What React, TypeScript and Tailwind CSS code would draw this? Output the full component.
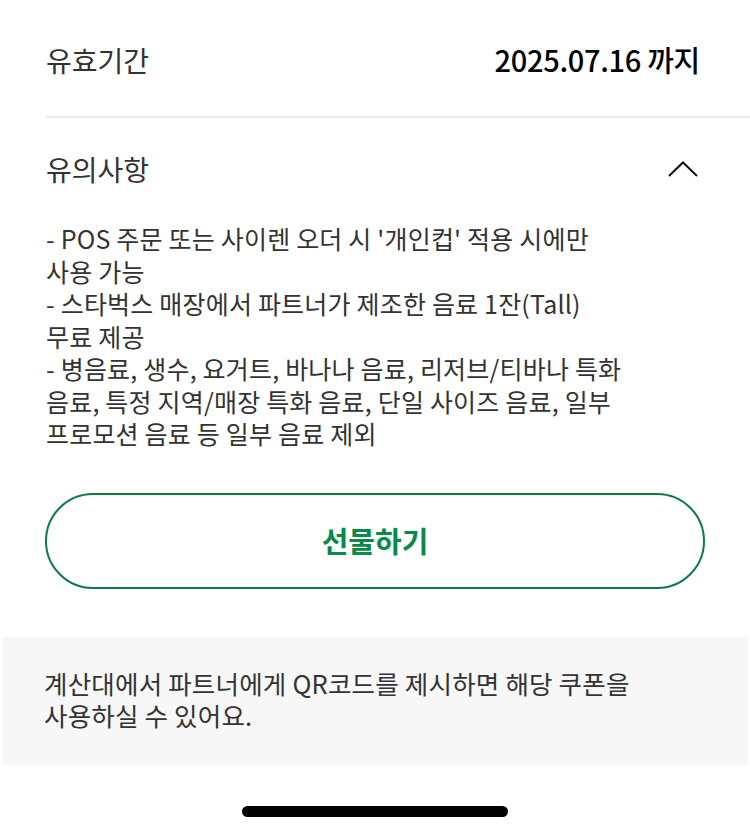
import React from "react";

export default function App() {
  const font = { fontFamily: '"Noto Sans CJK KR", "Noto Sans", sans-serif' };
  return (
    <div className="w-[750px] h-[833px] bg-white relative overflow-hidden" style={font}>
      <div className="pl-[46px]">
        <div className="h-[116px] flex items-center justify-between pr-[50px] pt-[4px]">
          <span className="text-[28px] text-[#333]">유효기간</span>
          <span className="text-[29px] text-black font-medium tracking-[-0.3px]">2025.07.16 까지</span>
        </div>
        <div className="h-[2px] bg-[#ececec]" />
        <div className="h-[106px] flex items-center justify-between pr-[52px] pb-[4px]">
          <span className="text-[28px] text-[#333]">유의사항</span>
          <svg width="30" height="16" viewBox="0 0 30 16" fill="none">
            <path d="M1 15 L15 1.5 L29 15" stroke="#111" strokeWidth="2" />
          </svg>
        </div>
        <div className="text-[25px] leading-[32.5px] text-[#333] tracking-[0.2px] pr-[40px] -mt-[2px]">
          <div>- POS 주문 또는 사이렌 오더 시 '개인컵' 적용 시에만</div>
          <div>사용 가능</div>
          <div>- 스타벅스 매장에서 파트너가 제조한 음료 1잔(Tall)</div>
          <div>무료 제공</div>
          <div>- 병음료, 생수, 요거트, 바나나 음료, 리저브/티바나 특화</div>
          <div>음료, 특정 지역/매장 특화 음료, 단일 사이즈 음료, 일부</div>
          <div>프로모션 음료 등 일부 음료 제외</div>
        </div>
      </div>
      <div className="px-[45px] mt-[43px]">
        <div className="h-[96px] rounded-full border-2 border-[#0b7a45] flex items-center justify-center">
          <span className="text-[29px] font-bold text-[#0a8a4a]">선물하기</span>
        </div>
      </div>
      <div className="mx-[2px] mt-[48px] h-[128px] bg-[#f7f7f7] px-[42px] pt-[30px]">
        <p className="text-[25.5px] leading-[32.5px] text-[#333] tracking-[0.2px]">
          계산대에서 파트너에게 QR코드를 제시하면 해당 쿠폰을
          <br />
          사용하실 수 있어요.
        </p>
      </div>
      <div className="absolute left-[242px] top-[806px] w-[266px] h-[11px] rounded-full bg-black" />
    </div>
  );
}
